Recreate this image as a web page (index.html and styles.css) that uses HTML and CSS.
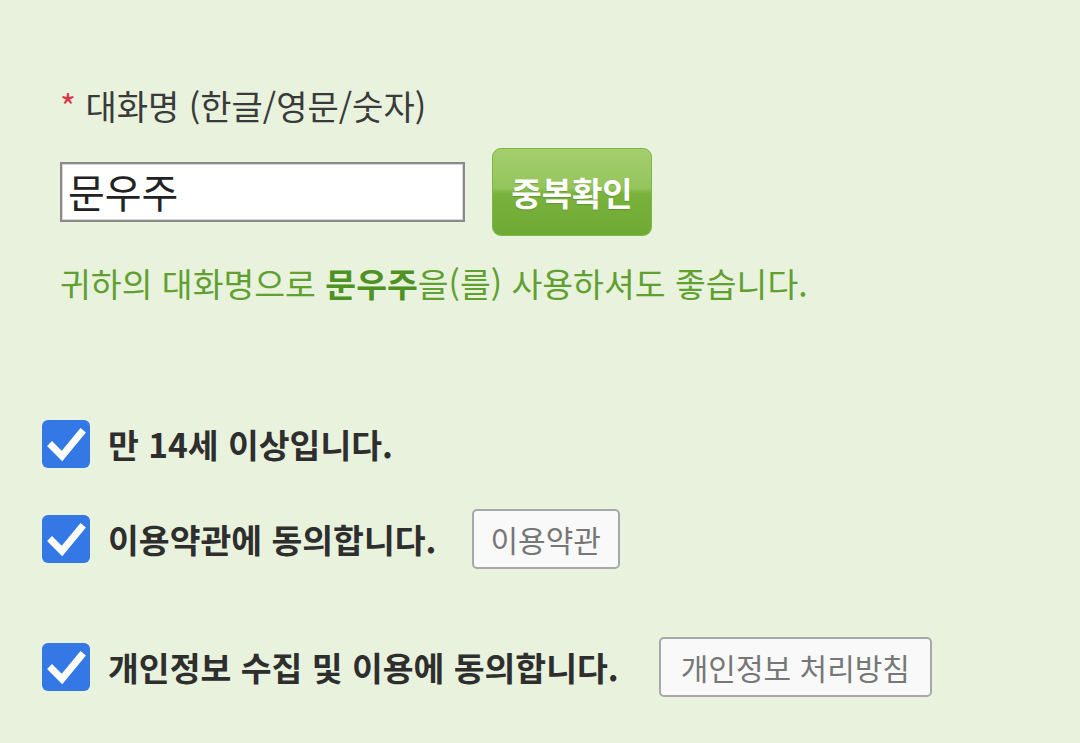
FILE: index.html
```html
<!DOCTYPE html>
<html lang="ko">
<head>
<meta charset="utf-8">
<link rel="stylesheet" href="styles.css">
</head>
<body>
<div class="page">
  <div class="field-label"><span class="req">*</span> 대화명 (한글/영문/숫자)</div>
  <div class="name-row">
    <div class="name-input">문우주</div>
    <button class="dup-btn">중복확인</button>
  </div>
  <div class="msg">귀하의 대화명으로 <b>문우주</b>을(를) 사용하셔도 좋습니다.</div>

  <div class="agree-list">
    <div class="agree row1">
      <span class="cb"><svg viewBox="0 0 48 48" width="48" height="48"><path d="M10 26 L20 36 L39 13" fill="none" stroke="#fff" stroke-width="7" stroke-linecap="square" stroke-linejoin="miter"/></svg></span>
      <span class="agree-text">만 14세 이상입니다.</span>
    </div>
    <div class="agree row2">
      <span class="cb"><svg viewBox="0 0 48 48" width="48" height="48"><path d="M10 26 L20 36 L39 13" fill="none" stroke="#fff" stroke-width="7" stroke-linecap="square" stroke-linejoin="miter"/></svg></span>
      <span class="agree-text">이용약관에 동의합니다.</span>
      <button class="doc-btn">이용약관</button>
    </div>
    <div class="agree row3">
      <span class="cb"><svg viewBox="0 0 48 48" width="48" height="48"><path d="M10 26 L20 36 L39 13" fill="none" stroke="#fff" stroke-width="7" stroke-linecap="square" stroke-linejoin="miter"/></svg></span>
      <span class="agree-text">개인정보 수집 및 이용에 동의합니다.</span>
      <button class="doc-btn doc-wide">개인정보 처리방침</button>
    </div>
  </div>
</div>
</body>
</html>
```

FILE: styles.css
```css
html, body {
  margin: 0;
  padding: 0;
  background: #e8f2dd;
}
body {
  font-family: "Noto Sans CJK KR", "Noto Sans", sans-serif;
  color: #333;
}
.page {
  padding: 86px 0 0 60px;
}
.field-label {
  font-size: 34px;
  line-height: 40px;
  color: #3a3a3a;
}
.req {
  color: #d6384a;
}
.name-row {
  display: flex;
  align-items: center;
  margin-top: 22px;
  height: 88px;
}
.name-input {
  box-sizing: border-box;
  width: 405px;
  height: 60px;
  background: #fff;
  border: 2px solid #8a8a8a;
  box-shadow: inset 0 0 0 1px #d8d8d8;
  font-size: 40px;
  line-height: 54px;
  padding-left: 6px;
  color: #222;
}
.dup-btn {
  box-sizing: border-box;
  margin-left: 27px;
  width: 160px;
  height: 88px;
  border: 1px solid #7fb548;
  border-radius: 9px;
  background: linear-gradient(to bottom, #a3cf6d 0%, #95c45c 45%, #79b23d 52%, #6faa34 100%);
  color: #fff;
  font-family: "Noto Sans CJK KR", sans-serif;
  font-weight: 700;
  font-size: 33px;
  padding: 0;
  text-shadow: 0 1px 1px rgba(60, 100, 20, 0.35);
}
.msg {
  margin-top: 27px;
  font-size: 33.5px;
  line-height: 40px;
  color: #5fa030;
}
.msg b {
  font-weight: 700;
  color: #4f9224;
}
.agree-list {
  display: flex;
  flex-direction: column;
  margin-left: -18px;
}
.agree {
  display: flex;
  align-items: center;
  height: 60px;
}
.row1 { margin-top: 111px; }
.row2 { margin-top: 35px; }
.row3 { margin-top: 68px; }
.cb {
  width: 48px;
  height: 48px;
  border-radius: 6px;
  background: #3478e6;
  display: flex;
  flex: none;
}
.agree-text {
  margin-left: 18px;
  font-size: 33.5px;
  font-weight: 700;
  color: #2e2e2e;
  line-height: 40px;
}
.doc-btn {
  margin-left: 35px;
  height: 60px;
  box-sizing: border-box;
  border: 2px solid #a8a8a8;
  border-radius: 5px;
  background: #f9f9f9;
  color: #777;
  font-family: "Noto Sans CJK KR", sans-serif;
  font-size: 30px;
  padding: 0 17px;
}
.doc-wide {
  margin-left: 40px;
  padding: 0 20px;
}
```
